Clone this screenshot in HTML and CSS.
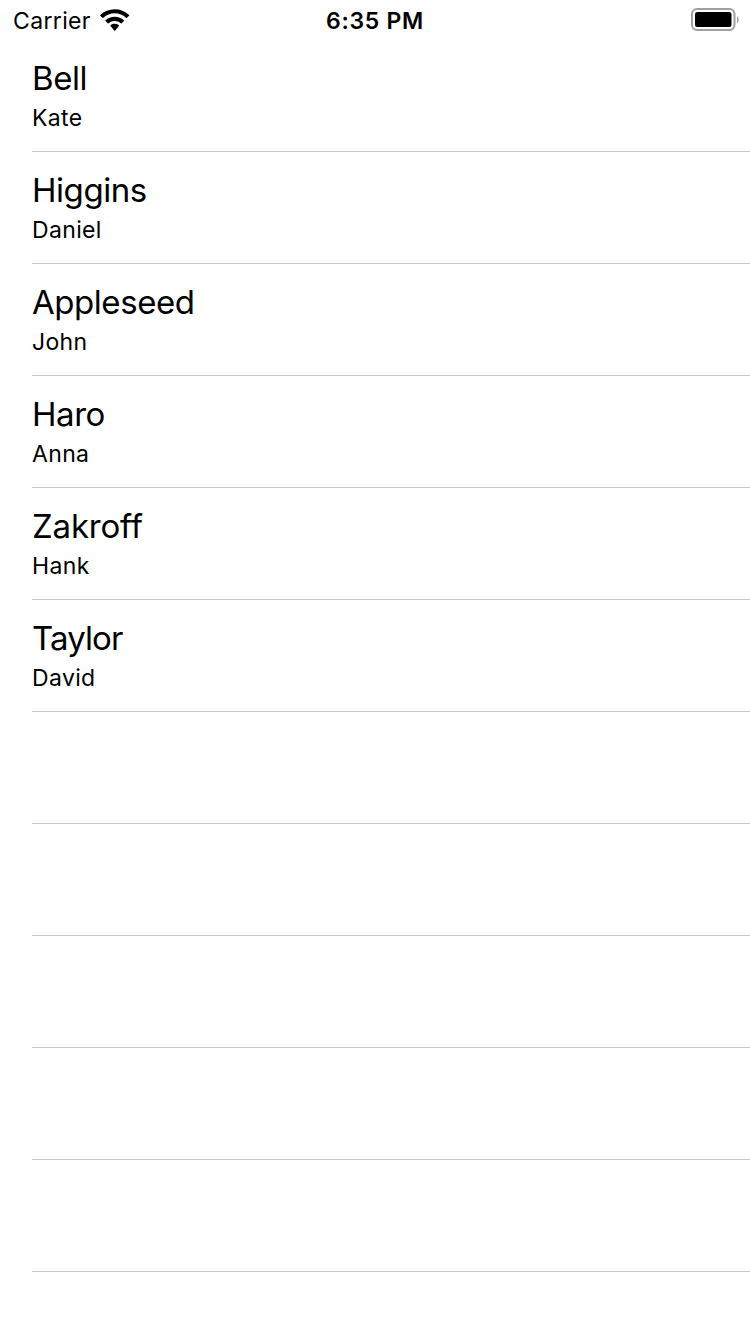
FILE: index.html
```html
<!DOCTYPE html>
<html lang="en">
<head>
<meta charset="utf-8">
<title>Contacts</title>
<link rel="stylesheet" href="styles.css">
</head>
<body>
<header class="status">
  <div class="network"><span class="carrier">Carrier</span>
    <svg class="wifi" width="30" height="22" viewBox="0 0 30 22"><path d="M14.700.3C9.200.3 4 2.400.3 5.900q-.4.400 0 .8l2.200 2.100q.4.400.8 0a16.500 16.500 0 0 1 22.800 0q.4.400.8 0l2.200-2.100q.4-.4 0-.8A21.500 21.500 0 0 0 14.700.3z"/><path d="M14.700 7.700c-3.500 0-6.700 1.300-9.200 3.500q-.4.400 0 .8l2.200 2.200q.4.400.8 0a9.500 9.500 0 0 1 12.400 0q.4.400.8 0l2.200-2.200q.4-.4 0-.8a14 14 0 0 0-9.200-3.500z"/><path d="M14.700 14.800c-1.600 0-3 .5-4.200 1.400q-.4.400 0 .8l3.700 4.500q.5.500 1 0l3.700-4.500q.4-.4 0-.8a6.800 6.800 0 0 0-4.200-1.400z"/></svg>
  </div>
  <time class="clock">6:35 PM</time>
  <svg class="battery" width="49" height="24" viewBox="0 0 49 24"><rect x="1" y="1" width="42.500" height="21" rx="5" fill="none" stroke="#a0a0a0" stroke-width="2"/><rect x="4" y="4" width="36.500" height="15" rx="2.500"/><path d="M46 8v7.500q1.800-1.500 1.800-3.750T46 8z" fill="#a0a0a0"/></svg>
</header>
<ul class="list">
  <li class="row"><span class="surname">Bell</span><span class="given">Kate</span></li>
  <li class="row"><span class="surname">Higgins</span><span class="given">Daniel</span></li>
  <li class="row"><span class="surname">Appleseed</span><span class="given">John</span></li>
  <li class="row"><span class="surname">Haro</span><span class="given">Anna</span></li>
  <li class="row"><span class="surname wide">Zakroff</span><span class="given">Hank</span></li>
  <li class="row"><span class="surname tight">Taylor</span><span class="given">David</span></li>
  <li class="row"></li>
  <li class="row"></li>
  <li class="row"></li>
  <li class="row"></li>
  <li class="row"></li>
</ul>
</body>
</html>
```
FILE: styles.css
```css
* { box-sizing: border-box; }
body {
  margin: 0;
  height: 1334px;
  overflow: hidden;
  background: #fff;
  color: #000;
  font-family: Inter, "Liberation Sans", sans-serif;
}
.status {
  display: grid;
  grid-template-columns: 1fr auto 1fr;
  align-items: center;
  height: 40px;
  padding: 0 10px 0 13px;
}
.network { display: flex; align-items: center; gap: 9px; }
.carrier { font-size: 23px; line-height: 28px; letter-spacing: 0.35px; padding-top: 2px; }
.clock { font-size: 23px; line-height: 28px; font-weight: 600; letter-spacing: 0.7px; padding-top: 2px; margin-right: 3px; }
.battery { justify-self: end; }
.list { list-style: none; margin: 0; padding: 0 0 0 32px; }
.row {
  display: flex;
  flex-direction: column;
  height: 112px;
  padding-top: 18px;
  border-bottom: 1px solid #c6c6c8;
}
.surname { font-size: 33px; line-height: 40px; letter-spacing: -0.45px; }
.wide { letter-spacing: -0.2px; }
.tight { letter-spacing: -0.9px; }
.given { font-size: 23px; line-height: 28px; padding-top: 6px; letter-spacing: 0.35px; }
```
